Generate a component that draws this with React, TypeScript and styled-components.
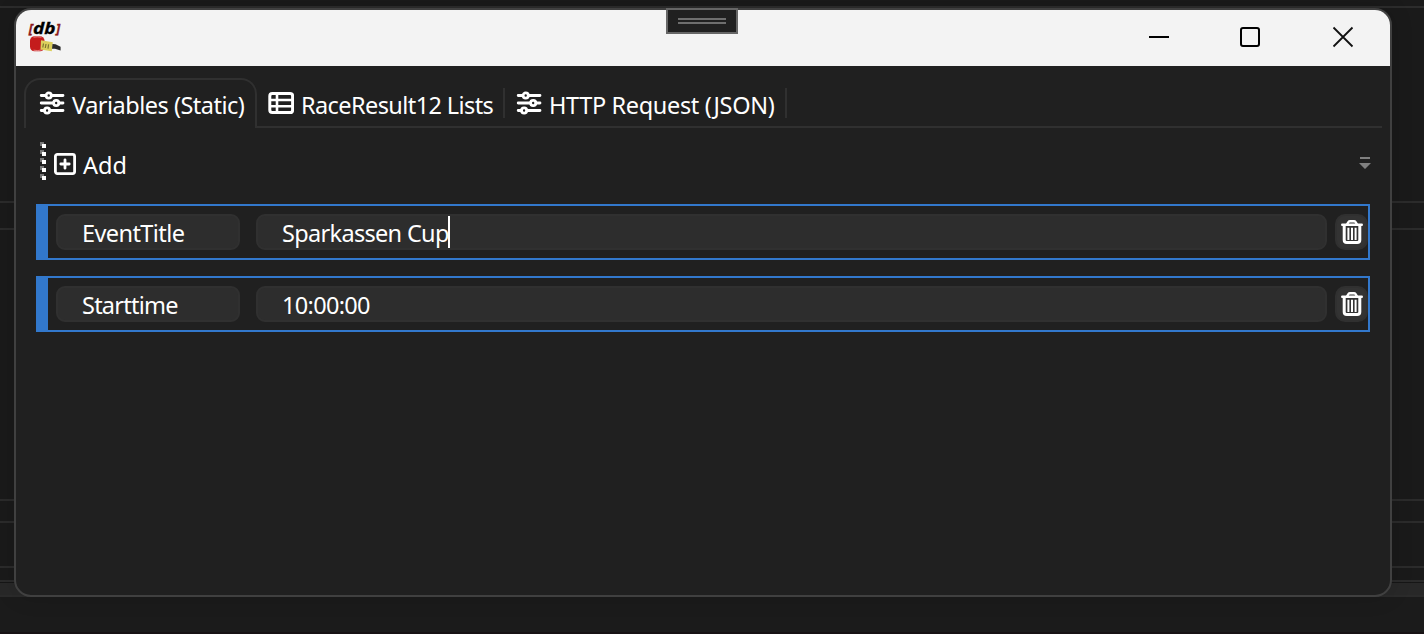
import React from "react";
import styled, { createGlobalStyle } from "styled-components";

const GlobalStyle = createGlobalStyle`
  * { box-sizing: border-box; }
  html, body { margin: 0; padding: 0; background: #1a1a1a; overflow: hidden; }
  body { font-family: "Noto Sans", "Open Sans", sans-serif; color: #fff; }
`;

const Desktop = styled.div`
  width: 1424px;
  height: 634px;
  position: relative;
  overflow: hidden;
  background: #1b1b1b;
`;

const Backdrop = styled.div`
  display: flex;
  flex-direction: column;
  height: 100%;
`;

const Band = styled.div<{ $h: number; $fill?: string; $line?: string }>`
  flex: none;
  height: ${(p) => p.$h}px;
  background: ${(p) => p.$fill ?? "#1a1a1a"};
  border-bottom: 2px solid ${(p) => p.$line ?? "#2b2b2b"};
`;

const StatusBand = styled.div`
  flex: none;
  height: 15px;
  background: #282828;
  border-top: 1px solid #161616;
  border-bottom: 2px solid #2b2b2b;
`;

const BottomEdge = styled.div`
  height: 2px;
  margin-top: auto;
  background: #171214;
`;

const Window = styled.section`
  position: absolute;
  left: 14px;
  top: 8px;
  width: 1378px;
  height: 589px;
  border: 2px solid #404040;
  border-radius: 17px;
  background: #202020;
  overflow: hidden;
  display: flex;
  flex-direction: column;
  box-shadow: 0 0 22px rgba(0, 0, 0, 0.14);
`;

const TitleBar = styled.header`
  flex: none;
  height: 56px;
  background: #f3f3f3;
  display: flex;
  align-items: flex-start;
  justify-content: space-between;
  padding: 8px 36px 0 12px;
`;

const Controls = styled.div`
  display: flex;
  align-items: center;
  height: 38px;

  & > svg:nth-child(1) { margin-right: 70px; }
  & > svg:nth-child(2) { margin-right: 71px; }
`;

const DebugGrip = styled.div`
  position: absolute;
  left: 666px;
  top: 8px;
  width: 72px;
  height: 26px;
  border: 2px solid #666;
  background: #202020;
  display: flex;
  flex-direction: column;
  align-items: center;
  gap: 2px;
  padding-top: 8px;
`;

const GripLine = styled.span`
  width: 48px;
  height: 2px;
  background: #6e6e6e;
`;

const TabBar = styled.nav`
  flex: none;
  display: flex;
  height: 50px;
  margin: 12px 8px 0;
`;

const Tab = styled.div<{ $w: number; $active?: boolean }>`
  width: ${(p) => p.$w}px;
  flex: none;
  display: flex;
  align-items: flex-start;
  gap: 7px;
  padding: ${(p) => (p.$active ? "9px 0 0 13px" : "11px 0 0 11px")};
  border: 2px solid #303030;
  border-width: ${(p) => (p.$active ? "2px 2px 0" : "0 0 2px")};
  border-radius: ${(p) => (p.$active ? "16px 16px 0 0" : "0")};

  & > svg { flex: none; margin-top: 2px; }
`;

const TabDivider = styled.span`
  flex: none;
  width: 2px;
  border-bottom: 2px solid #303030;
  background: linear-gradient(#303030, #303030) 0 10px / 2px 30px no-repeat;
`;

const TabRest = styled.span`
  flex: 1;
  border-bottom: 2px solid #303030;
`;

const Label = styled.span<{ $ls?: number }>`
  font-size: 23.5px;
  line-height: 32px;
  letter-spacing: ${(p) => p.$ls ?? 0}px;
  white-space: pre;
`;

const Toolbar = styled.div`
  flex: none;
  display: flex;
  justify-content: space-between;
  height: 40px;
  margin: 14px 19px 0 24px;
`;

const AddButton = styled.div`
  display: flex;
  align-items: flex-start;

  & > svg:nth-child(2) { margin: 11px 7px 0 8px; }
  & > span { margin-top: 7px; }
`;

const Rows = styled.div`
  display: flex;
  flex-direction: column;
  gap: 16px;
  margin: 22px 20px 0;
`;

const Row = styled.div`
  display: flex;
  height: 56px;
  border: 2px solid #3278cc;
  border-left-width: 12px;
  padding: 8px 0 0 8px;
`;

const Field = styled.div<{ $w: number; $gap: number }>`
  width: ${(p) => p.$w}px;
  height: 36px;
  margin-right: ${(p) => p.$gap}px;
  flex: none;
  display: flex;
  align-items: flex-start;
  padding: 1px 0 0 24px;
  border: 2px solid #303030;
  border-radius: 9px;
  background: #2d2d2d;
`;

const Caret = styled.i`
  width: 2px;
  height: 32px;
  margin: -1px 0 0 -1px;
  background: #fff;
`;

const DeleteButton = styled.div`
  width: 33px;
  height: 36px;
  flex: none;
  display: flex;
  justify-content: center;
  padding-top: 4px;
  border: 2px solid #303030;
  border-radius: 10px;
  background: #333;
`;

const SlidersIcon = () => (
  <svg width="26" height="24" viewBox="0 0 26 24" fill="none" stroke="#fff" strokeWidth="2.8" strokeLinecap="round">
    <path d="M2.2 4.5H6.5M12.5 4.5H24M2.2 12H14.5M20 12H24M2.2 19.5H5M11 19.5H24" />
    <circle cx="9.7" cy="4.5" r="2.6" />
    <circle cx="17.2" cy="12" r="2.6" />
    <circle cx="8.1" cy="19.5" r="2.6" />
  </svg>
);

const TableIcon = () => (
  <svg width="26" height="24" viewBox="0 0 26 24" fill="none" stroke="#fff">
    <rect x="1.8" y="2.4" width="22.8" height="19.2" rx="2.5" strokeWidth="3" />
    <path d="M1.5 9H24.5M1.5 15.2H24.5M9 2.2V21.8" strokeWidth="2.6" />
  </svg>
);

const PlusSquareIcon = () => (
  <svg width="22" height="22" viewBox="0 0 22 22" fill="none" stroke="#fff" strokeWidth="2.8">
    <rect x="1.4" y="1.4" width="19.2" height="19.2" rx="2" />
    <path d="M11 6.8V15.2M6.8 11H15.2" strokeLinecap="round" />
  </svg>
);

const TrashIcon = () => (
  <svg width="22" height="25" viewBox="0 0 22 25" fill="none" stroke="#fff">
    <path d="M1.3 4.8H20.7" strokeWidth="2.6" strokeLinecap="round" />
    <path d="M6 4.4L7.6 1.9Q8 1.3 9 1.3H13Q14 1.3 14.4 1.9L16 4.4" strokeWidth="2.4" />
    <path d="M3.2 5V20Q3.2 22.6 5.8 22.6H16.2Q18.8 22.6 18.8 20V5" strokeWidth="3" />
    <path d="M7.4 7.8V20M11 7.8V20M14.6 7.8V20" strokeWidth="2" />
  </svg>
);

const GripIcon = () => (
  <svg width="6" height="40" viewBox="0 0 6 40">
    {[0, 8, 16, 24, 32].map((y) => (
      <g key={y}>
        <rect x="0" y={y} width="4" height="4" fill="#777" />
        <rect x="2" y={y + 2} width="4" height="4" fill="#fff" />
      </g>
    ))}
  </svg>
);

const OverflowIcon = () => (
  <svg width="12" height="40" viewBox="0 0 12 40" fill="#808080">
    <path d="M1 15H11V17H1ZM0 21H12L6 27Z" />
  </svg>
);

const AppLogo = () => (
  <svg
    width="36"
    height="38"
    viewBox="0 0 36 38"
    overflow="visible"
    fontFamily="Open Sans, Noto Sans, sans-serif"
    fontWeight="700"
    fontStyle="italic"
  >
    <text x="0.8" y="14.6" fontSize="12.5" fill="#8c1b1b" stroke="#8c1b1b" strokeWidth="0.4">[</text>
    <text x="5" y="16" fontSize="16.5" fill="#000" stroke="#000" strokeWidth="0.3" textLength="22.5" lengthAdjust="spacingAndGlyphs">db</text>
    <text x="28" y="14.6" fontSize="12.5" fill="#8c1b1b" stroke="#8c1b1b" strokeWidth="0.4">]</text>
    <rect x="2" y="18.2" width="14.5" height="15" rx="4.5" fill="#c41c1c" />
    <path d="M5.5 19.2Q9 18.4 13.5 19.2M5.5 32.2Q10 33.2 14 31.8" stroke="#e88a8a" strokeWidth="0.9" fill="none" />
    <path d="M13 22.3L24.8 24.3L23.8 33.2L12.5 31.5Z" fill="#dccf5c" />
    <path d="M15.5 25.5L14.8 29.5M18 26L17.3 30M20.6 26.4L20 30.6" stroke="#7d7530" strokeWidth="1.2" />
    <path d="M24.5 26L27.5 26.3L32.6 28.8V32.4L27 30.7L24 30.7Z" fill="#2a2a2a" />
  </svg>
);

export default function App() {
  return (
    <Desktop>
      <GlobalStyle />
      <Backdrop>
        <Band $h={8} $line="#2c2c2c" />
        <Band $h={195} />
        <Band $h={27} />
        <Band $h={271} />
        <Band $h={22} />
        <Band $h={45} />
        <Band $h={14} />
        <StatusBand />
        <BottomEdge />
      </Backdrop>
      <Window>
        <TitleBar>
          <AppLogo />
          <Controls>
            <svg width="20" height="20"><path d="M0 10H20" stroke="#000" strokeWidth="2" /></svg>
            <svg width="22" height="22" fill="none"><rect x="2" y="2" width="18" height="18" rx="2" stroke="#000" strokeWidth="2" /></svg>
            <svg width="22" height="22"><path d="M1.5 1.5L20.5 20.5M20.5 1.5L1.5 20.5" stroke="#111" strokeWidth="1.8" /></svg>
          </Controls>
        </TitleBar>
        <TabBar>
          <Tab $w={233} $active><SlidersIcon /><Label $ls={-0.5}>Variables (Static)</Label></Tab>
          <Tab $w={246}><TableIcon /><Label $ls={-0.59}>RaceResult12 Lists</Label></Tab>
          <TabDivider />
          <Tab $w={280}><SlidersIcon /><Label $ls={-0.35}>HTTP Request (JSON)</Label></Tab>
          <TabDivider />
          <TabRest />
        </TabBar>
        <Toolbar>
          <AddButton><GripIcon /><PlusSquareIcon /><Label>Add</Label></AddButton>
          <OverflowIcon />
        </Toolbar>
        <Rows>
          <Row>
            <Field $w={184} $gap={16}><Label $ls={-0.58}>EventTitle</Label></Field>
            <Field $w={1071} $gap={8}><Label $ls={-0.68}>Sparkassen Cup</Label><Caret /></Field>
            <DeleteButton><TrashIcon /></DeleteButton>
          </Row>
          <Row>
            <Field $w={184} $gap={16}><Label $ls={-0.76}>Starttime</Label></Field>
            <Field $w={1071} $gap={8}><Label $ls={-0.67}>10:00:00</Label></Field>
            <DeleteButton><TrashIcon /></DeleteButton>
          </Row>
        </Rows>
      </Window>
      <DebugGrip><GripLine /><GripLine /></DebugGrip>
    </Desktop>
  );
}
